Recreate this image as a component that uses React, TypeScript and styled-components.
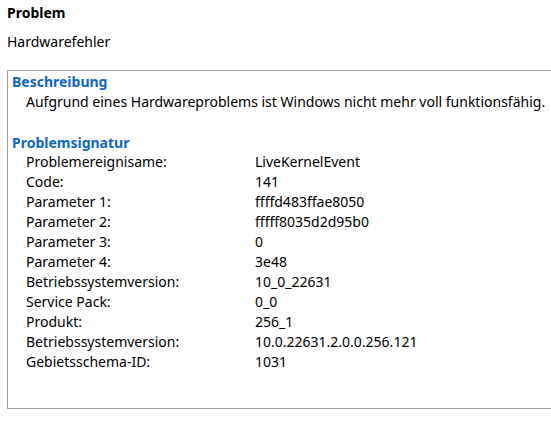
import { Fragment } from 'react'
import styled, { createGlobalStyle } from 'styled-components'

interface Row {
  label: string
  value: string
}

const rows: Row[] = [
  { label: 'Problemereignisame:', value: 'LiveKernelEvent' },
  { label: 'Code:', value: '141' },
  { label: 'Parameter 1:', value: 'ffffd483ffae8050' },
  { label: 'Parameter 2:', value: 'fffff8035d2d95b0' },
  { label: 'Parameter 3:', value: '0' },
  { label: 'Parameter 4:', value: '3e48' },
  { label: 'Betriebssystemversion:', value: '10_0_22631' },
  { label: 'Service Pack:', value: '0_0' },
  { label: 'Produkt:', value: '256_1' },
  { label: 'Betriebssystemversion:', value: '10.0.22631.2.0.0.256.121' },
  { label: 'Gebietsschema-ID:', value: '1031' },
]

const GlobalStyle = createGlobalStyle`
  html, body {
    margin: 0;
    padding: 0;
    background: #fff;
    overflow: hidden;
  }
  body {
    font-family: 'Noto Sans', 'Open Sans', sans-serif;
    font-size: 14px;
    color: #000;
  }
`

const Page = styled.div`
  width: 551px;
  height: 423px;
  overflow: hidden;
  padding: 3px 0 0 7px;
  box-sizing: border-box;
`
const Title = styled.div`
  font-weight: 700;
  line-height: 20px;
  height: 20px;
`
const Subtitle = styled.div`
  line-height: 20px;
  margin-top: 9px;
`
const Box = styled.section`
  margin-top: 18px;
  width: 600px;
  height: 339px;
  box-sizing: border-box;
  border: 1px solid #a0a0a0;
  padding: 1px 0 0 4px;
`
const Heading = styled.h3<{ $gap?: number }>`
  margin: ${p => p.$gap ?? 0}px 0 0 0;
  font-size: 14px;
  font-weight: 700;
  color: #0f66cc;
  line-height: 20px;
`
const Text = styled.p`
  margin: 0;
  padding-left: 14px;
  line-height: 20px;
`
const Table = styled.div`
  display: grid;
  grid-template-columns: 229px auto;
  padding-left: 14px;
  margin-top: -1px;
  line-height: 20px;
`
const Cell = styled.span`
  white-space: nowrap;
`

export default function App() {
  return (
    <>
      <GlobalStyle />
      <Page>
        <Title>Problem</Title>
        <Subtitle>Hardwarefehler</Subtitle>
        <Box>
          <Heading>Beschreibung</Heading>
          <Text>Aufgrund eines Hardwareproblems ist Windows nicht mehr voll funktionsfähig.</Text>
          <Heading $gap={21}>Problemsignatur</Heading>
          <Table>
            {rows.map((r, i) => (
              <Fragment key={i}>
                <Cell>{r.label}</Cell>
                <Cell>{r.value}</Cell>
              </Fragment>
            ))}
          </Table>
        </Box>
      </Page>
    </>
  )
}
